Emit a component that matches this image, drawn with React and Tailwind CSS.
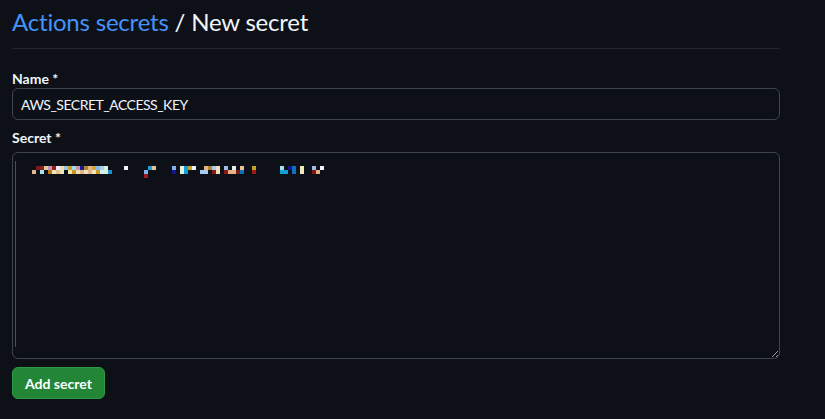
import { useState } from 'react';

// pixelated secret value shown in the textarea: [col, row, colour], 4px cells
const CELLS = [
  [1, 0, '#7a1a1a'], [2, 0, '#8a1f1f'], [3, 0, '#e6c89a'], [4, 0, '#b79ab8'], [5, 0, '#9a1c1c'],
  [6, 0, '#eef0f4'], [7, 0, '#ecdcb4'], [8, 0, '#94c4e6'], [9, 0, '#c8a028'], [10, 0, '#a8d8ee'],
  [11, 0, '#c898a8'], [12, 0, '#161a9a'], [13, 0, '#b8802a'], [14, 0, '#e2b486'], [15, 0, '#d4a43a'],
  [16, 0, '#86b8ea'], [17, 0, '#a8ccf2'], [18, 0, '#d6f0e0'],
  [0, 1, '#e2b496'], [2, 1, '#a4e0f0'], [4, 1, '#b4761e'], [5, 1, '#f2e2b6'], [6, 1, '#e2c494'],
  [7, 1, '#f0e2b8'], [9, 1, '#f2e2b6'], [10, 1, '#c8961e'], [11, 1, '#f0e0b6'], [12, 1, '#e2b488'],
  [13, 1, '#f0e0b8'], [14, 1, '#e0b488'], [15, 1, '#f0e4ba'], [16, 1, '#c89a26'], [17, 1, '#d8ecf4'],
  [18, 1, '#d6f0e0'], [19, 1, '#1890d0'],
  [23, 0, '#eef0f6'], [29, 0, '#1e9ee0'], [30, 0, '#e6c494'], [28, 1, '#7eb4ea'], [28, 2, '#a01818'],
  [35, 0, '#7eb4ea'], [35, 1, '#14168e'], [37, 0, '#e0f4dc'], [37, 1, '#e0f4dc'], [38, 0, '#129ed6'],
  [38, 1, '#129ed6'], [39, 0, '#c8a022'], [40, 0, '#eef0f6'],
  [42, 1, '#a8ccf4'], [43, 0, '#e2b488'], [43, 1, '#a8ccf4'], [44, 0, '#b8802a'], [45, 0, '#a8ccf4'],
  [45, 1, '#8a1a1a'], [46, 0, '#f0e2b8'], [46, 1, '#f0e2b8'],
  [48, 0, '#9ebce6'], [48, 1, '#8a1a1a'], [49, 1, '#e2b486'], [50, 0, '#e4f0e4'], [50, 1, '#e2b486'],
  [51, 1, '#7a1a1a'], [52, 0, '#e6c494'], [52, 1, '#1270c0'], [55, 0, '#c8a022'], [55, 1, '#a01818'],
  [62, 0, '#a4dcf2'], [62, 1, '#129ed6'], [63, 1, '#129ed6'], [64, 0, '#14168e'], [65, 0, '#1270c0'],
  [65, 1, '#1270c0'], [67, 0, '#f0e6c0'], [67, 1, '#f0e6c0'],
  [70, 0, '#9ebce6'], [70, 1, '#7a1a1a'], [71, 1, '#e2b486'], [72, 0, '#eef0f6'],
];

const App = () => {
  const [name, setName] = useState('AWS_SECRET_ACCESS_KEY');

  return (
    <div className="min-h-screen bg-[#0d1117] [color-scheme:dark]" style={{ fontFamily: 'Lato, "Liberation Sans", Arial, sans-serif' }}>
      <div className="w-[768px] ml-3">
        {/* Header */}
        <div className="pt-[4px] pb-[8px] border-b border-[#21262d]">
          <h2 className="text-[24px] leading-[36px] font-normal tracking-[-0.2px] text-[#f0f6fc]">
            <a href="#" className="text-[#4493f8]">Actions secrets</a> / New secret
          </h2>
        </div>

        <form className="pt-[21px]" onSubmit={(e) => e.preventDefault()}>
          {/* Name */}
          <label className="block text-[14px] leading-[18px] font-bold text-[#f0f6fc]">Name *</label>
          <input
            type="text"
            value={name}
            onChange={(e) => setName(e.target.value)}
            className="block w-full h-[32px] px-[8px] text-[14px] tracking-[-0.5px] text-[#f0f6fc] bg-[#0d1117] border border-[#3d444d] rounded-[6px] outline-none"
          />

          {/* Secret */}
          <label className="block mt-[9px] text-[14px] leading-[18px] font-bold text-[#f0f6fc]">Secret *</label>
          <div className="relative mt-[5px]">
            <textarea
              className="block w-full h-[207px] resize-y bg-[#0d1117] border border-[#3d444d] rounded-[6px] outline-none"
            />
            <div className="absolute left-[3px] top-[9px] w-px h-[186px] bg-[#4a5058]" />
            <svg className="absolute left-[20px] top-[14px]" width="300" height="12" viewBox="0 0 300 12" shapeRendering="crispEdges">
              {CELLS.map(([c, r, color], i) => (
                <rect key={i} x={c * 4} y={r * 4} width="4" height="4" fill={color} />
              ))}
            </svg>
          </div>

          <button
            type="submit"
            className="mt-[8px] h-[32px] px-[12px] text-[14px] font-bold text-white bg-[#238636] border border-[#2f9a45] rounded-[6px]"
          >
            Add secret
          </button>
        </form>
      </div>
    </div>
  );
};

export default App;
